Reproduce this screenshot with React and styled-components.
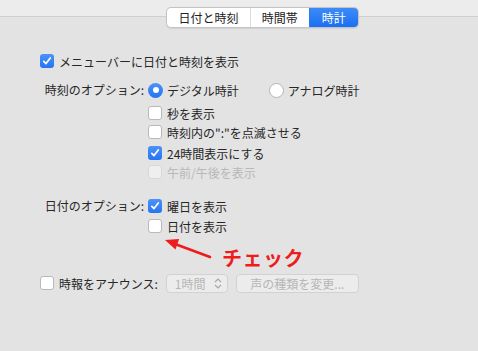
import React from "react";
import styled, { createGlobalStyle, css } from "styled-components";

const GlobalStyle = createGlobalStyle`
  html, body {
    margin: 0;
    padding: 0;
  }
  body {
    width: 478px;
    height: 351px;
    overflow: hidden;
    font-family: "Noto Sans CJK JP", "Noto Sans", sans-serif;
    font-size: 12px;
    color: #262626;
    background: linear-gradient(
      #ececec 0px,
      #ececec 16px,
      #cfcfcf 16px,
      #cfcfcf 17px,
      #e3e3e3 17px
    );
  }
`;

const Page = styled.div`
  display: flex;
  flex-direction: column;
  height: 351px;
`;

const Tabs = styled.div`
  display: flex;
  margin: 7px 0 0 166px;
  height: 19px;
  width: 191px;
  border: 1px solid #c4c4c4;
  border-radius: 5px;
  background: #fff;
  overflow: hidden;
  box-shadow: 0 0.5px 1px rgba(0, 0, 0, 0.08);
`;

const Tab = styled.div`
  display: flex;
  align-items: center;
  justify-content: center;
  width: ${(p) => p.$w}px;
  font-size: 12px;
  color: #222;
  border-left: 1px solid #dcdcdc;
  &:first-child {
    border-left: none;
  }
  ${(p) =>
    p.$active &&
    css`
      background: linear-gradient(#3d8bf8, #1a6ff2);
      color: #fff;
      border-left-color: #2a78f3;
    `}
`;

const Form = styled.div`
  display: flex;
  flex-direction: column;
  padding-left: 40px;
  margin-top: 23px;
`;

const Row = styled.div`
  display: flex;
  align-items: center;
  height: 20px;
  gap: ${(p) => p.$gap ?? 5}px;
  margin-top: ${(p) => p.$mt ?? 0}px;
  color: ${(p) => (p.$disabled ? "#b8b8b8" : "inherit")};
  white-space: nowrap;
`;

const Options = styled.div`
  display: grid;
  grid-template-columns: 104px auto;
  column-gap: 4px;
  margin-top: ${(p) => p.$mt}px;
`;

const Label = styled.div`
  text-align: right;
  height: 20px;
  line-height: 20px;
  white-space: nowrap;
`;

const Stack = styled.div`
  display: flex;
  flex-direction: column;
`;

const Box = styled.span`
  display: inline-flex;
  align-items: center;
  justify-content: center;
  flex: none;
  width: 14px;
  height: 14px;
  box-sizing: border-box;
  border-radius: 3px;
  border: 1px solid #b9b9b9;
  background: #fff;
  ${(p) =>
    p.$checked &&
    css`
      border: none;
      background: linear-gradient(#4c93f8, #2574f2);
    `}
  ${(p) =>
    p.$disabled &&
    css`
      border-color: #d8d8d8;
      background: #efefef;
    `}
`;

const Radio = styled.span`
  display: inline-flex;
  align-items: center;
  justify-content: center;
  flex: none;
  width: 15px;
  height: 15px;
  box-sizing: border-box;
  border-radius: 50%;
  border: 1px solid #b4b4b4;
  background: #fff;
  ${(p) =>
    p.$checked &&
    css`
      border: none;
      background: linear-gradient(#4c93f8, #2574f2);
      &::after {
        content: "";
        width: 6px;
        height: 6px;
        border-radius: 50%;
        background: #fff;
      }
    `}
`;

const RadioGroup = styled.div`
  display: flex;
  align-items: center;
  gap: 4px;
  margin-right: ${(p) => p.$mr ?? 0}px;
`;

const Check = () => (
  <svg width="10" height="10" viewBox="0 0 10 10">
    <path
      d="M1.8 5.3 L4 7.6 L8.3 1.9"
      fill="none"
      stroke="#fff"
      strokeWidth="1.7"
      strokeLinecap="round"
      strokeLinejoin="round"
    />
  </svg>
);

const CheckItem = ({ checked, disabled, children, mt }) => (
  <Row $mt={mt} $disabled={disabled}>
    <Box $checked={checked} $disabled={disabled}>
      {checked && <Check />}
    </Box>
    {children}
  </Row>
);

const Annotation = styled.div`
  display: flex;
  align-items: flex-start;
  height: 32px;
  padding-left: 124px;
  margin-top: 2px;
`;

const Note = styled.span`
  font-size: 20px;
  font-weight: 700;
  color: #ee1c1c;
  line-height: 24px;
  margin: 8px 0 0 8px;
  letter-spacing: 0.5px;
`;

const Bottom = styled(Row)`
  height: 22px;
`;

const Popup = styled.div`
  display: flex;
  align-items: center;
  justify-content: space-between;
  width: 62px;
  height: 19px;
  box-sizing: border-box;
  margin-left: 3px;
  padding: 0 5px 0 8px;
  border: 1px solid #d2d2d2;
  border-radius: 4px;
  background: #ececec;
  color: #b6b6b6;
`;

const Button = styled.div`
  display: flex;
  align-items: center;
  justify-content: center;
  width: 123px;
  height: 19px;
  box-sizing: border-box;
  margin-left: 3px;
  border: 1px solid #d2d2d2;
  border-radius: 4px;
  background: #ececec;
  color: #b6b6b6;
`;

export default function App() {
  return (
    <>
      <GlobalStyle />
      <Page>
        <Tabs>
          <Tab $w={84}>日付と時刻</Tab>
          <Tab $w={58}>時間帯</Tab>
          <Tab $w={49} $active>
            時計
          </Tab>
        </Tabs>
        <Form>
          <CheckItem checked>メニューバーに日付と時刻を表示</CheckItem>
          <Options $mt={9}>
            <Label>時刻のオプション:</Label>
            <Row $gap={0}>
              <RadioGroup $mr={30}>
                <Radio $checked />
                デジタル時計
              </RadioGroup>
              <RadioGroup>
                <Radio />
                アナログ時計
              </RadioGroup>
            </Row>
            <span />
            <Stack>
              <CheckItem mt={3}>秒を表示</CheckItem>
              <CheckItem mt={-1}>時刻内の":"を点滅させる</CheckItem>
              <CheckItem checked mt={1}>
                24時間表示にする
              </CheckItem>
              <CheckItem disabled mt={-1}>
                午前/午後を表示
              </CheckItem>
            </Stack>
          </Options>
          <Options $mt={14}>
            <Label>日付のオプション:</Label>
            <Stack>
              <CheckItem checked>曜日を表示</CheckItem>
              <CheckItem>日付を表示</CheckItem>
            </Stack>
          </Options>
          <Annotation>
            <svg width="50" height="26" viewBox="0 0 50 26">
              <line
                x1="46"
                y1="19"
                x2="11"
                y2="6"
                stroke="#ee1c1c"
                strokeWidth="2.6"
                strokeLinecap="round"
              />
              <path d="M1 2 L15.1 1.1 L11.5 11.5 Z" fill="#ee1c1c" />
            </svg>
            <Note>チェック</Note>
          </Annotation>
          <Bottom $mt={2}>
            <Box />
            時報をアナウンス:
            <Popup>
              1時間
              <svg width="8" height="13" viewBox="0 0 8 13">
                <path
                  d="M1 5 L4 2 L7 5 M1 8 L4 11 L7 8"
                  fill="none"
                  stroke="#a8a8a8"
                  strokeWidth="1.2"
                />
              </svg>
            </Popup>
            <Button>声の種類を変更...</Button>
          </Bottom>
        </Form>
      </Page>
    </>
  );
}
